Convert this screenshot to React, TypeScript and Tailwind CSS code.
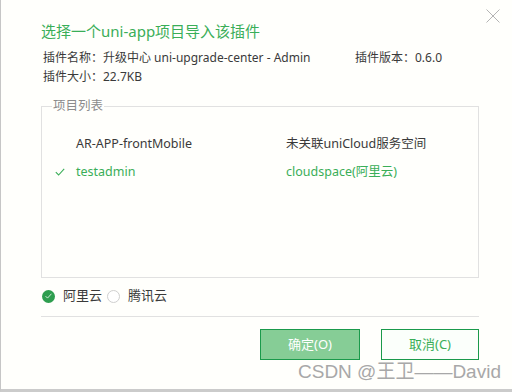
import React from "react";

const cjk = "font-['Noto_Sans','Noto_Sans_CJK_SC',sans-serif]";

function Tick({ className }: { className?: string }) {
  return (
    <svg viewBox="0 0 10 8" className={className} fill="none">
      <path d="M0.8 4.2 L3.6 7 L9.2 0.8" stroke="currentColor" strokeWidth="1.1" />
    </svg>
  );
}

export default function App() {
  const projects = [
    { name: "AR-APP-frontMobile", space: "未关联uniCloud服务空间", selected: false },
    { name: "testadmin", space: "cloudspace(阿里云)", selected: true },
  ];

  return (
    <div
      className={`relative w-[512px] h-[392px] overflow-hidden bg-[#fffffc] border-l border-[#c6c6c6] border-b-[3px] border-b-[#cbcbcb] ${cjk} text-[#333]`}
    >
      <button className="absolute right-[12px] top-[9px] w-[14px] h-[14px] text-[#b4b4b4]">
        <svg viewBox="0 0 14 14" className="w-full h-full">
          <path d="M0.5 0.5 L13.5 13.5 M13.5 0.5 L0.5 13.5" stroke="currentColor" strokeWidth="1" />
        </svg>
      </button>

      <div className="flex flex-col pl-[40px] pr-[33px]">
        <h1 className="pt-[21px] text-[15px] leading-[20px] text-[#3aae58]">
          选择一个uni-app项目导入该插件
        </h1>

        <div className="mt-[7px] pl-[2px] text-[12px] leading-[19px] text-[#3a3a3a]">
          <div className="flex">
            <span className="w-[312px]">插件名称：升级中心 uni-upgrade-center - Admin</span>
            <span>插件版本：0.6.0</span>
          </div>
          <div>插件大小：22.7KB</div>
        </div>

        <fieldset className="mt-[12px] h-[180px] border border-[#e1e1e1]">
          <legend className="ml-[10px] px-[1px] text-[12.5px] leading-[16px] text-[#8c8c8c]">
            项目列表
          </legend>
          <div className="flex flex-col pt-[16px] pl-[13px] text-[12.5px]">
            {projects.map((p) => (
              <div
                key={p.name}
                className={`flex items-center h-[28px] ${p.selected ? "text-[#3aae58]" : "text-[#3a3a3a]"}`}
              >
                <span className="w-[21px]">
                  {p.selected && <Tick className="w-[10px] h-[8px] text-[#3aae58]" />}
                </span>
                <span className="w-[210px]">{p.name}</span>
                <span>{p.space}</span>
              </div>
            ))}
          </div>
        </fieldset>

        <div className="flex items-center h-[34px] mt-[1px] text-[13px] text-[#3a3a3a]">
          <span className="flex items-center justify-center w-[13px] h-[13px] ml-[1px] rounded-full bg-[#2e9e4f] text-white">
            <Tick className="w-[7px] h-[6px]" />
          </span>
          <span className="ml-[8px]">阿里云</span>
          <span className="ml-[5px] w-[13px] h-[13px] rounded-full border border-[#cfcfcf] bg-white" />
          <span className="ml-[8px]">腾讯云</span>
        </div>

        <div className="mt-[3px] border-t border-[#e1e1e1]" />

        <div className="flex justify-end gap-[21px] mt-[12px]">
          <button className="w-[100px] h-[31px] border border-[#1a9a4b] bg-[#86cd96] text-[13px] text-white">
            确定(O)
          </button>
          <button className="w-[98px] h-[31px] border border-[#1a9a4b] bg-[#fbfffb] text-[13px] text-[#3aae58]">
            取消(C)
          </button>
        </div>
      </div>

      <div className="absolute left-[297px] top-[360px] text-[19px] leading-[24px] text-[#a8a8a8] font-['Liberation_Sans','Noto_Sans_CJK_SC',sans-serif] [text-shadow:0_0_1px_#fff]">
        CSDN @王卫——David
      </div>
    </div>
  );
}
